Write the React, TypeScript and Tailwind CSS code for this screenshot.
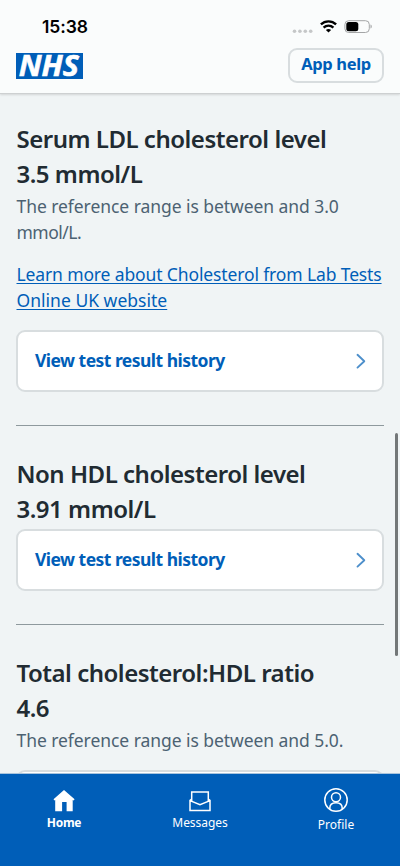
import React from "react";

function HistoryLink() {
  return (
    <a className="flex h-[62px] items-center justify-between rounded-[9px] border-2 border-[#d8dddf] bg-white pr-4 pl-[17px]">
      <span className="pb-0.5 text-[17.5px] leading-6 font-bold tracking-[-0.53px] whitespace-nowrap text-[#005eb8]">View test result history</span>
      <svg width="10" height="16" viewBox="0 0 10 16" fill="none" stroke="#4d8fcb" strokeWidth="1.9" strokeLinecap="round" strokeLinejoin="round">
        <path d="M1.5 1.8 8.3 8.2 1.5 14.6" />
      </svg>
    </a>
  );
}

function Heading({ title, value }: { title: string; value: string }) {
  return (
    <h2 className="pl-[0.5px] text-[24px] leading-[35px] font-semibold tracking-[-0.49px] whitespace-nowrap text-[#212b32]">
      <span className="block">{title}</span>
      <span className="block">{value}</span>
    </h2>
  );
}

export default function App() {
  return (
    <div className="relative flex h-[866px] w-[400px] flex-col overflow-hidden bg-[#f0f4f5] font-['Noto_Sans',sans-serif]">
      <header className="z-10 flex h-[94px] shrink-0 flex-col border-b border-[#cdd0d1] bg-[#fafcfc] shadow-[0_1px_2px_rgba(0,0,0,0.12)]">
        <div className="flex h-12 items-start justify-between pt-[17px] pr-[27px] pl-[42px]">
          <span className="font-['Inter',sans-serif] text-[17.5px] leading-5 font-semibold tracking-[-0.1px] text-black">15:38</span>
          <div className="flex items-center">
            <svg width="21" height="20" viewBox="0 0 21 20" fill="#c5c7c8">
              <circle cx="2.5" cy="14.2" r="1.8" />
              <circle cx="7.9" cy="14.2" r="1.8" />
              <circle cx="13.3" cy="14.2" r="1.8" />
              <circle cx="18.7" cy="14.2" r="1.8" />
            </svg>
            <svg className="ml-[7px]" width="17" height="20" viewBox="0 0 17 20" fill="none" stroke="black" strokeWidth="2.4">
              <path d="M.9 7.4c4.3-4.1 10.9-4.1 15.2 0" />
              <path d="M3.6 10.6c2.8-2.7 7-2.7 9.8 0" />
              <path d="M8.5 15.6 5.9 13c1.5-1.4 3.7-1.4 5.2 0z" fill="black" stroke="none" />
            </svg>
            <svg className="ml-[7px]" width="29" height="20" viewBox="0 0 29 20">
              <rect x=".9" y="3.7" width="24.4" height="11.8" rx="3.8" fill="none" stroke="#a4a6a7" />
              <rect x="2.3" y="5" width="12" height="9.2" rx="2.5" fill="black" />
              <path d="M26.5 7.5c1.7.5 1.7 3.5 0 4z" fill="#a4a6a7" />
            </svg>
          </div>
        </div>
        <div className="flex items-start justify-between pr-4 pl-4">
          <svg className="mt-[5px] overflow-visible" width="67" height="26" viewBox="0 0 67 26">
            <rect width="67" height="26" fill="#005eb8" />
            <text x="2.8" y="23.2" textLength="60" lengthAdjust="spacingAndGlyphs" fill="white" stroke="white" strokeWidth="0.6" className="font-['Open_Sans',sans-serif] text-[28.5px] font-bold italic">NHS</text>
          </svg>
          <button className="flex h-[35px] w-24 items-center justify-center rounded-[9px] border-2 border-[#d8dddf] pb-1 text-[16.5px] leading-6 font-bold tracking-[-0.35px] whitespace-nowrap text-[#005eb8]">App help</button>
        </div>
      </header>

      <main className="min-h-0 flex-1 overflow-hidden px-4 pt-[27px]">
        <section>
          <Heading title="Serum LDL cholesterol level" value="3.5 mmol/L" />
          <p className="mt-[3px] pl-[0.5px] text-[17.5px] leading-[25.5px] tracking-[-0.06px] whitespace-nowrap text-[#4c6272]">
            The reference range is between and 3.0<br /><span className="tracking-[-0.5px]">mmol/L.</span>
          </p>
          <a className="mt-[17px] block pl-[0.5px] text-[17.5px] leading-[25.5px] tracking-[-0.13px] whitespace-nowrap text-[#005eb8] underline decoration-1 underline-offset-2">
            Learn more about Cholesterol from Lab Tests<br /><span className="tracking-[0.02px]">Online UK website</span>
          </a>
          <div className="mt-[17px]"><HistoryLink /></div>
        </section>
        <hr className="mt-[33px] mb-[30px] border-[#8e999d]" />
        <section>
          <Heading title="Non HDL cholesterol level" value="3.91 mmol/L" />
          <div className="mt-[3px]"><HistoryLink /></div>
        </section>
        <hr className="mt-[33px] mb-[30px] border-[#8e999d]" />
        <section>
          <Heading title="Total cholesterol:HDL ratio" value="4.6" />
          <p className="mt-[3px] pl-[0.5px] text-[17.5px] leading-[25.5px] tracking-[-0.06px] whitespace-nowrap text-[#4c6272]">The reference range is between and 5.0.</p>
        </section>
        <div className="mt-[16.5px] h-4 rounded-t-[9px] border-2 border-b-0 border-[#d8dddf] bg-white" />
      </main>

      <div className="absolute top-[433px] right-[2px] z-20 h-[223px] w-[3px] rounded-full bg-[#737778]" />

      <nav className="grid h-[93px] shrink-0 grid-cols-[128px_144px_128px] border-t border-[#a9c4dd] bg-[#005eb8] text-[12px] leading-4 tracking-[-0.05px] text-white">
        <a className="flex flex-col items-center pt-4 font-bold tracking-[-0.3px]">
          <svg width="22" height="22" viewBox="0 0 22 22" fill="white">
            <path d="M11 .1 21.6 9.3l-1 1.1-.9-.5v11.4h-6.1V12.1H9.1v9.2H2.2V9.9l-.7.5-1-1.1z" />
          </svg>
          <span className="mt-[3px]">Home</span>
        </a>
        <a className="flex flex-col items-center pt-4">
          <svg width="22" height="22" viewBox="0 0 22 22" fill="none" stroke="white" strokeWidth="1.5">
            <path d="M2.7 11.5V1.9h16.6v9.6" />
            <path d="M2.7 9.2 1 10.4v10.2h20V10.4l-1.7-1.2M1 10.6l10 4.2 10-4.2" />
          </svg>
          <span className="mt-[3px]">Messages</span>
        </a>
        <a className="flex flex-col items-center pt-[14px] tracking-[0.05px]">
          <svg width="24" height="24" viewBox="0 0 24 24" fill="none" stroke="white" strokeWidth="1.5">
            <circle cx="12" cy="12" r="11.2" />
            <circle cx="12" cy="9.3" r="4.5" />
            <path d="M5.8 21v-.9c0-3.2 2.5-5.3 6.2-5.3s6.2 2.1 6.2 5.3v.9" />
          </svg>
          <span className="mt-[5px]">Profile</span>
        </a>
      </nav>
    </div>
  );
}
